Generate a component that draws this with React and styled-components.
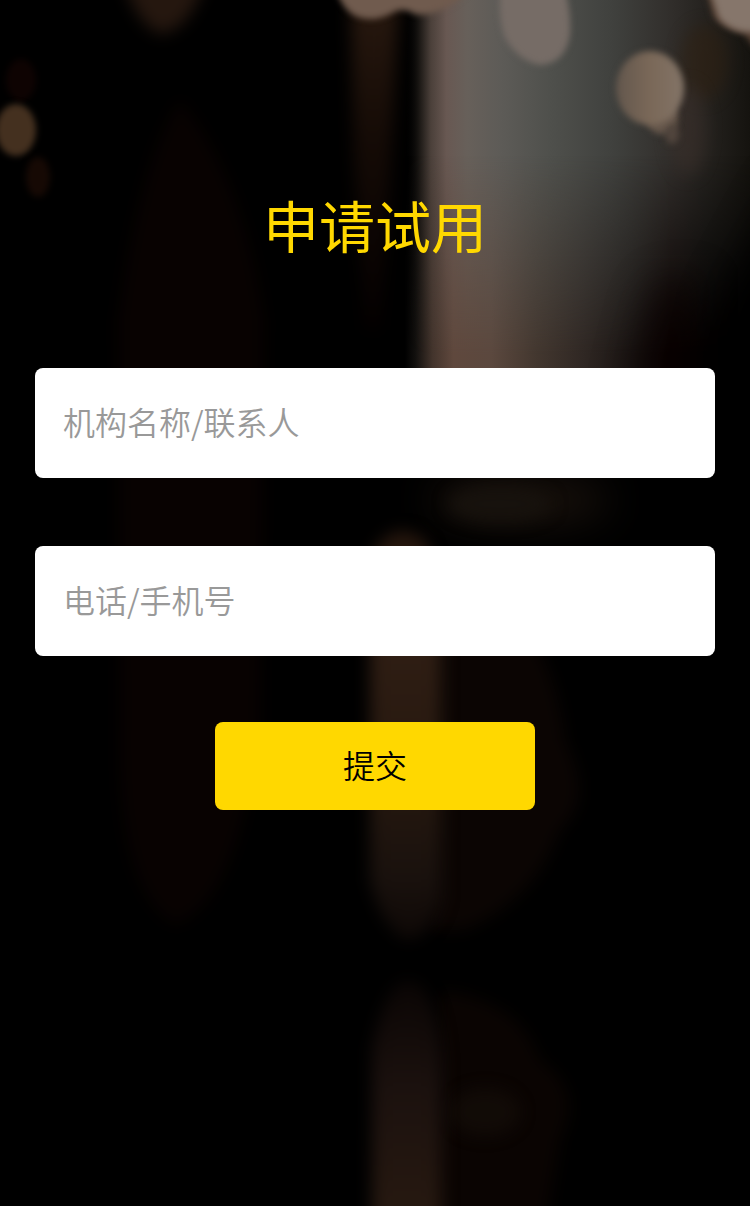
import React from "react";
import styled, { createGlobalStyle } from "styled-components";

const GlobalStyle = createGlobalStyle`
  *, *::before, *::after { box-sizing: border-box; }
  body {
    margin: 0;
    background: #000;
    font-family: "Noto Sans CJK SC", "Noto Sans", sans-serif;
  }
`;

const Page = styled.main`
  position: relative;
  min-height: 100vh;
  padding: 184px 35px 68px;
  overflow: hidden;
  isolation: isolate;
`;

const Backdrop = styled.svg`
  position: absolute;
  inset: 0;
  z-index: -1;
  width: 100%;
  height: 100%;

  filter {
    color-interpolation-filters: sRGB;
  }
`;

const Title = styled.h1`
  margin: 0 0 104px;
  color: #ffd800;
  font-size: 56px;
  line-height: 80px;
  font-weight: 400;
  text-align: center;
`;

const Form = styled.form`
  display: flex;
  flex-direction: column;
  align-items: center;
  gap: 66px;
`;

const Fields = styled.div`
  display: flex;
  flex-direction: column;
  gap: 68px;
  width: 100%;
`;

const Field = styled.input`
  width: 100%;
  height: 110px;
  padding: 0 28px 4px;
  border: 0;
  border-radius: 8px;
  background: #fff;
  color: #333;
  font-family: inherit;
  font-size: 32px;
  font-weight: 350;

  &::placeholder {
    color: #999;
    opacity: 1;
  }
`;

const SubmitButton = styled.button`
  width: 320px;
  max-width: 100%;
  height: 88px;
  padding: 0 0 4px;
  border: 0;
  border-radius: 8px;
  background: #ffd800;
  color: #000;
  font-family: inherit;
  font-size: 32px;
  font-weight: 350;
  cursor: pointer;
`;

function Photo() {
  return (
    <Backdrop viewBox="0 0 750 1206" preserveAspectRatio="xMidYMin slice" aria-hidden="true">
      <defs>
        <filter id="blur3" x="-50%" y="-50%" width="200%" height="200%"><feGaussianBlur stdDeviation="3" /></filter>
        <filter id="blur8" x="-50%" y="-50%" width="200%" height="200%"><feGaussianBlur stdDeviation="8" /></filter>
        <filter id="blur20" x="-50%" y="-50%" width="200%" height="200%"><feGaussianBlur stdDeviation="20" /></filter>
        <linearGradient id="wallTop" gradientUnits="userSpaceOnUse" x1="405" y1="0" x2="750" y2="0">
          <stop offset="0" stopColor="#000" stopOpacity="0" />
          <stop offset="0.04" stopColor="#191613" />
          <stop offset="0.075" stopColor="#4b403a" />
          <stop offset="0.12" stopColor="#685852" />
          <stop offset="0.18" stopColor="#67605a" />
          <stop offset="0.28" stopColor="#5d5b57" />
          <stop offset="0.42" stopColor="#4f504c" />
          <stop offset="0.6" stopColor="#40413e" />
          <stop offset="0.78" stopColor="#302d2a" />
          <stop offset="1" stopColor="#15130f" />
        </linearGradient>
        <linearGradient id="wallLow" gradientUnits="userSpaceOnUse" x1="405" y1="0" x2="750" y2="0">
          <stop offset="0" stopColor="#000" />
          <stop offset="0.03" stopColor="#12100e" />
          <stop offset="0.08" stopColor="#43342c" />
          <stop offset="0.14" stopColor="#5f483d" />
          <stop offset="0.25" stopColor="#5b483e" />
          <stop offset="0.38" stopColor="#43372f" />
          <stop offset="0.52" stopColor="#2f2723" />
          <stop offset="0.66" stopColor="#1a1513" />
          <stop offset="0.77" stopColor="#080100" />
          <stop offset="0.88" stopColor="#000" />
        </linearGradient>
        <linearGradient id="fadeDown" x1="0" y1="0" x2="0" y2="1">
          <stop offset="0.42" stopColor="#000" />
          <stop offset="0.96" stopColor="#fff" />
        </linearGradient>
        <mask id="lowMask"><rect x="400" width="350" height="370" fill="url(#fadeDown)" /></mask>
        <linearGradient id="leftStrip" x1="0" y1="0" x2="0" y2="1">
          <stop offset="0" stopColor="#2a1a10" />
          <stop offset="0.45" stopColor="#150b06" />
          <stop offset="1" stopColor="#050000" />
        </linearGradient>
        <linearGradient id="column" x1="0" y1="0" x2="0" y2="1">
          <stop offset="0" stopColor="#24150c" />
          <stop offset="0.3" stopColor="#2e1d13" />
          <stop offset="0.6" stopColor="#26180f" />
          <stop offset="0.85" stopColor="#19110d" />
          <stop offset="1" stopColor="#0e0806" />
        </linearGradient>
        <linearGradient id="columnLow" x1="0" y1="0" x2="0" y2="1">
          <stop offset="0" stopColor="#0a0504" />
          <stop offset="0.4" stopColor="#1b110e" />
          <stop offset="1" stopColor="#2a1b11" />
        </linearGradient>
        <linearGradient id="bulb" x1="0" y1="0" x2="1" y2="0">
          <stop offset="0" stopColor="#63574d" />
          <stop offset="0.5" stopColor="#7a6858" />
          <stop offset="1" stopColor="#837467" />
        </linearGradient>
      </defs>

      <rect width="750" height="1206" fill="#000" />

      <path d="M180 100 Q245 180 264 320 L260 720 Q240 900 175 925 Q115 890 120 720 L118 320 Q140 160 180 100Z" fill="#080201" filter="url(#blur8)" />
      <path d="M350 -20H400L390 180L380 330H365L354 160Z" fill="url(#leftStrip)" filter="url(#blur8)" />

      <rect x="405" width="345" height="368" fill="url(#wallTop)" />
      <rect x="405" width="345" height="368" fill="url(#wallLow)" mask="url(#lowMask)" />
      <path d="M820 150L780 200L725 300L700 420H820Z" fill="#000" filter="url(#blur20)" />
      <path d="M655 285L700 280V400H625Z" fill="#080000" opacity="0.6" filter="url(#blur20)" />
      <ellipse cx="704" cy="62" rx="24" ry="38" fill="#302010" opacity="0.5" filter="url(#blur8)" />
      <ellipse cx="688" cy="130" rx="18" ry="46" fill="#3c302b" opacity="0.5" filter="url(#blur8)" />

      <path d="M124 -20H205Q190 30 160 34Q135 22 124 -20Z" fill="#25170f" filter="url(#blur8)" />
      <ellipse cx="21" cy="80" rx="15" ry="21" fill="#0e0302" filter="url(#blur3)" />
      <ellipse cx="16" cy="130" rx="20" ry="26" fill="#44301f" filter="url(#blur3)" />
      <ellipse cx="38" cy="177" rx="12" ry="20" fill="#160904" filter="url(#blur3)" />

      <path d="M336 -10H470Q440 18 415 14Q402 7 394 12Q375 23 358 17Q344 12 336 -10Z" fill="#705b4e" filter="url(#blur3)" />
      <path d="M500 -10H565Q571 12 570 34Q566 62 542 65Q520 63 505 38Q498 20 500 -10Z" fill="#766c66" filter="url(#blur3)" />
      <ellipse cx="662" cy="118" rx="16" ry="16" fill="#67584c" filter="url(#blur3)" />
      <ellipse cx="672" cy="134" rx="7" ry="10" fill="#51453d" filter="url(#blur3)" />
      <ellipse cx="650" cy="88" rx="34" ry="37" fill="url(#bulb)" filter="url(#blur3)" />
      <path d="M706 -10H760V54L744 34Q722 29 713 16Z" fill="#554033" filter="url(#blur3)" />
      <path d="M710 -10H760V32Q732 34 719 18Z" fill="#86766b" filter="url(#blur3)" />

      <ellipse cx="520" cy="500" rx="90" ry="26" fill="#17100b" filter="url(#blur20)" />
      <ellipse cx="500" cy="504" rx="52" ry="18" fill="#17120d" filter="url(#blur8)" />
      <path d="M440 640H535Q560 690 565 740Q595 800 560 830Q535 900 465 930H430Z" fill="#0b0503" filter="url(#blur8)" />
      <path d="M370 560Q390 515 425 540L442 580V900Q430 939 405 940Q380 925 370 880Z" fill="url(#column)" filter="url(#blur8)" />
      <path d="M440 990Q520 1000 540 1060Q585 1090 560 1140L545 1230H430Z" fill="#0a0402" filter="url(#blur8)" />
      <ellipse cx="485" cy="1112" rx="35" ry="24" fill="#150e09" opacity="0.7" filter="url(#blur8)" />
      <path d="M372 1050Q385 980 410 980Q438 990 442 1060V1250H372Z" fill="url(#columnLow)" filter="url(#blur8)" />
    </Backdrop>
  );
}

export default function App() {
  return (
    <>
      <GlobalStyle />
      <Page>
        <Photo />
        <Title>申请试用</Title>
        <Form onSubmit={(event) => event.preventDefault()}>
          <Fields>
            <Field type="text" name="contact" aria-label="机构名称/联系人" placeholder="机构名称/联系人" />
            <Field type="tel" name="phone" aria-label="电话/手机号" placeholder="电话/手机号" />
          </Fields>
          <SubmitButton type="submit">提交</SubmitButton>
        </Form>
      </Page>
    </>
  );
}
